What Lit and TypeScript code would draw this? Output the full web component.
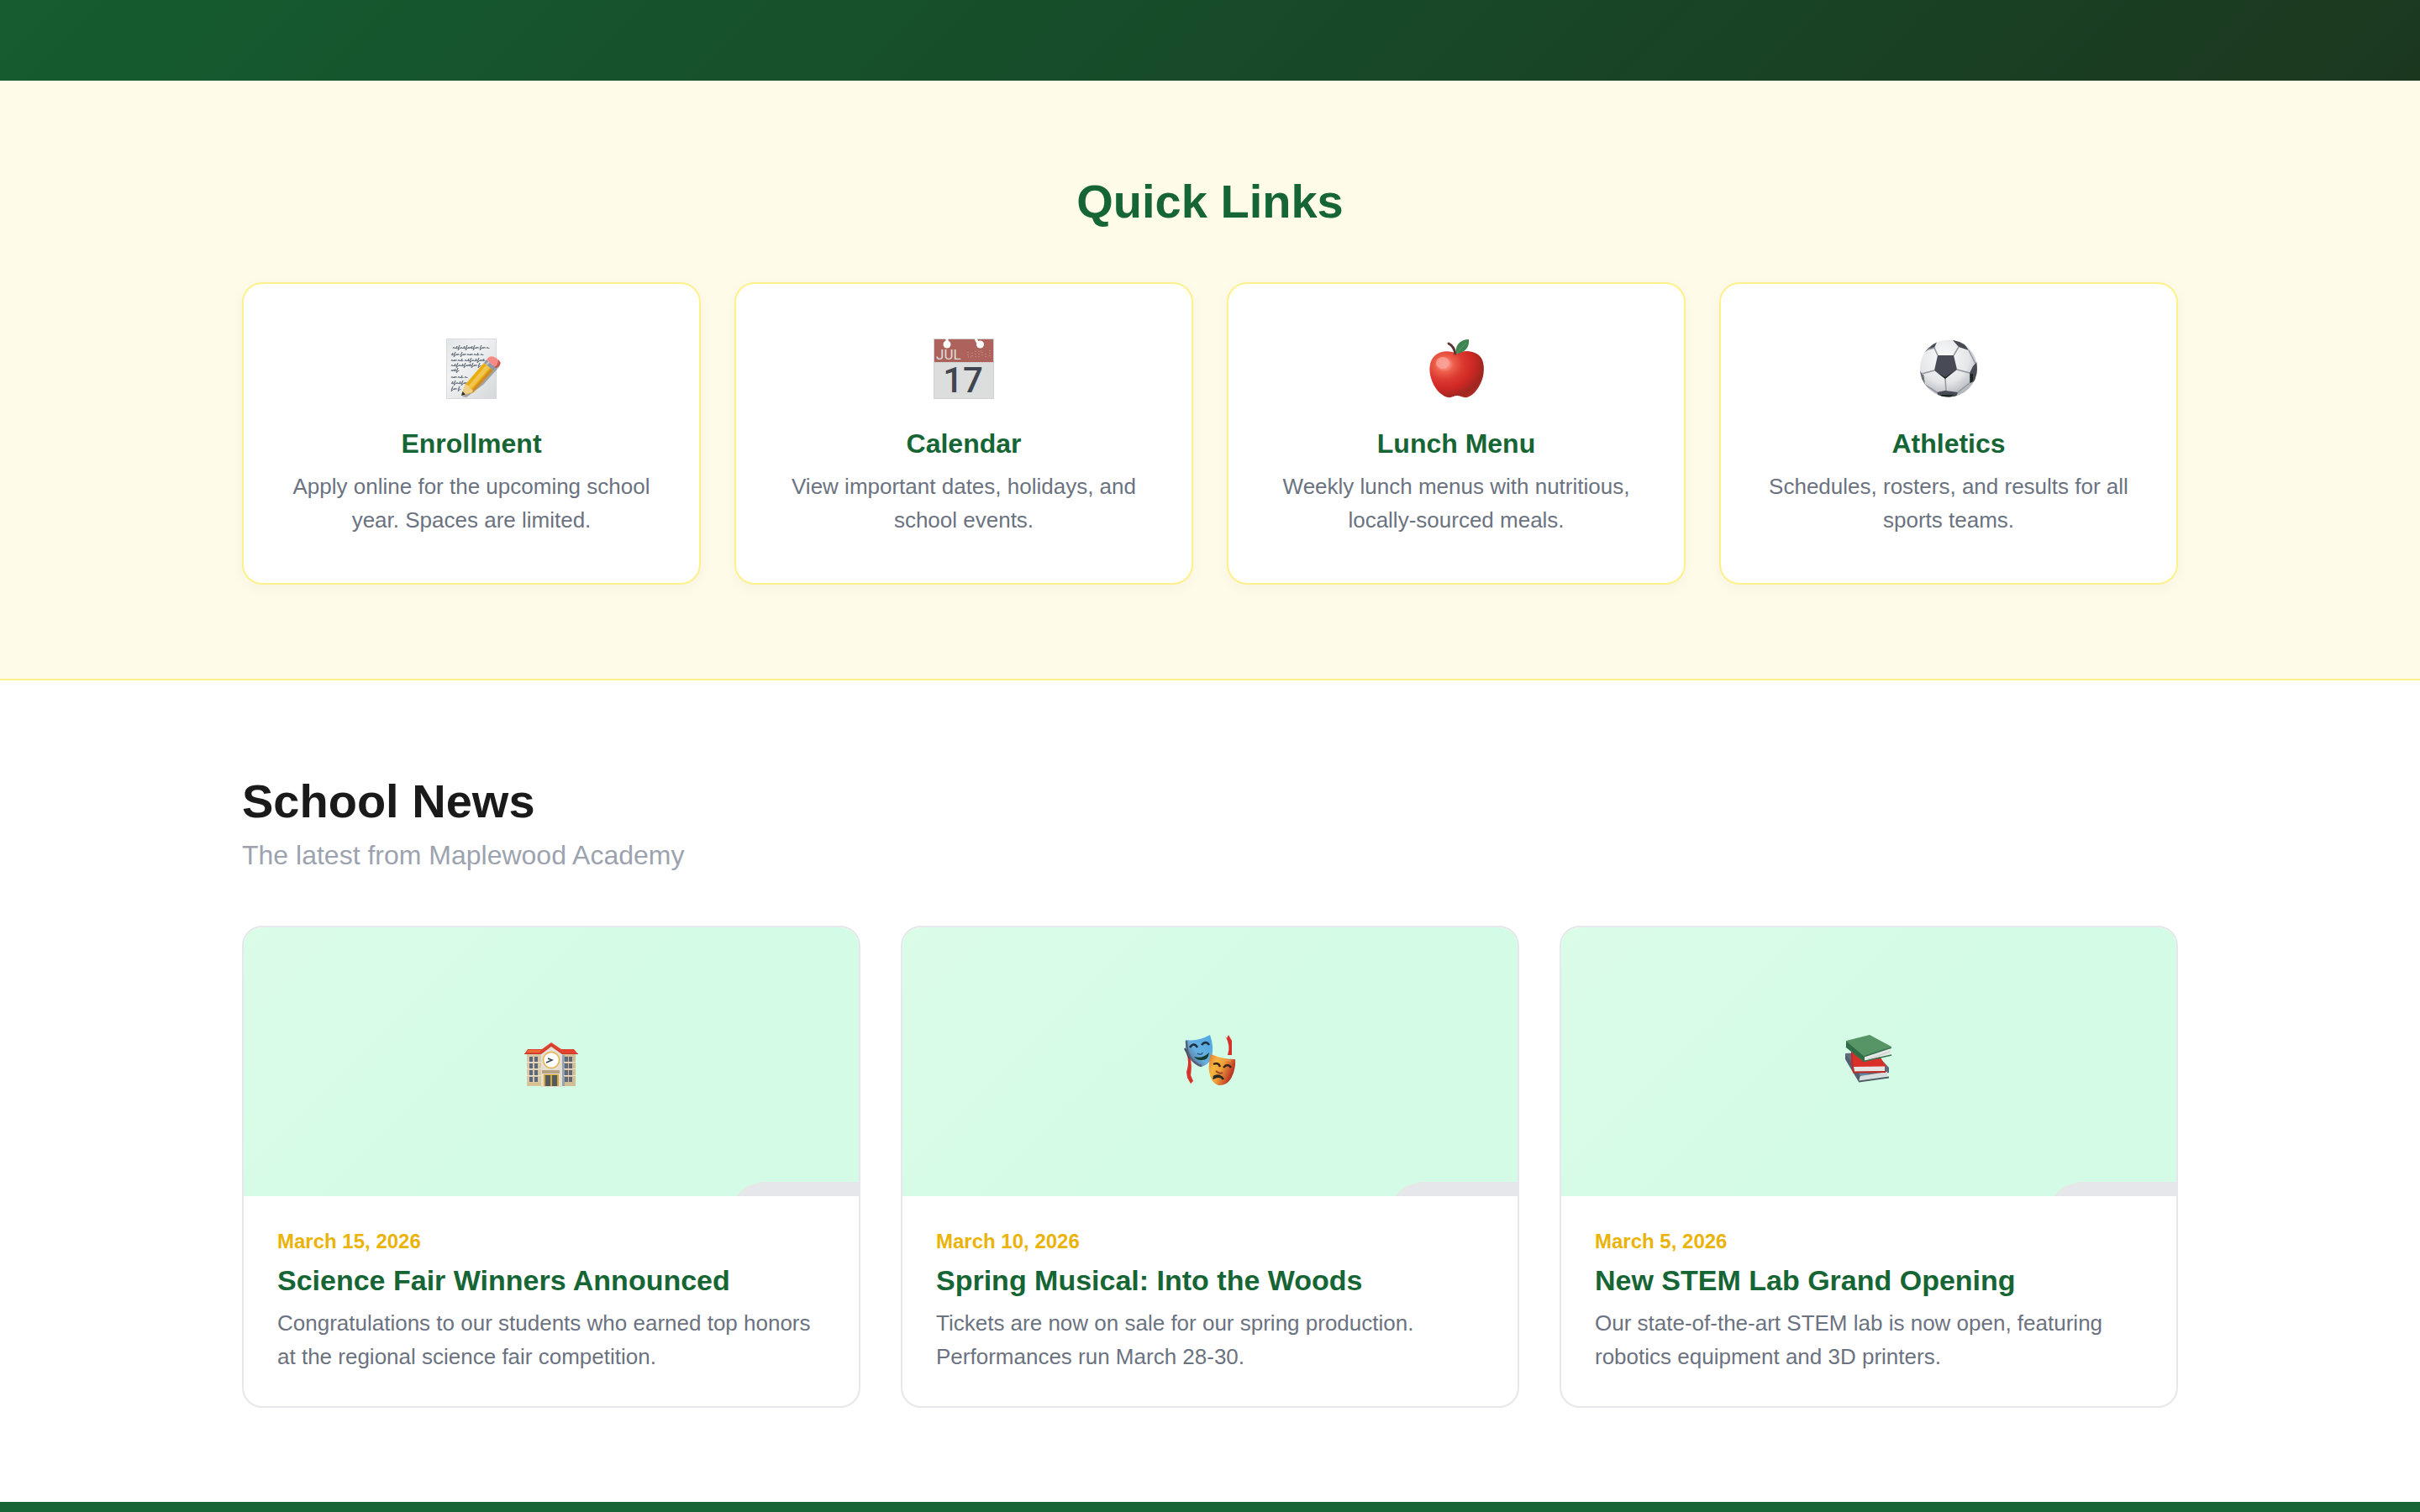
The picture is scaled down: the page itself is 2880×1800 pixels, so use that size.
import { LitElement, html, svg, css, type TemplateResult } from "lit";
import { customElement, property } from "lit/decorators.js";

type Art = TemplateResult;

/* Each row of handwriting: baseline, start and end. */
const handwriting: Array<[number, number, number]> = [
  [12, 6, 52], [20, 6, 48], [27, 6, 46], [33, 6, 40], [39, 6, 14],
  [47, 6, 27], [54, 6, 22], [61, 6, 18],
];

const strokes = ["l2 -3l-1 3l2 -1l0 1", "l1 -2l0 2l2 -2l0 2", "l1 -2l1 2l1 -1l0 1", "l2 -4l-2 6l3 -3l0 1", "m2 0"];

const scribble = ([y, from, to]: [number, number, number]) => {
  let d = `M${from} ${y}`;
  for (let x = from, i = y; x < to; x += 3, i++) d += strokes[(i * 3 + (i >> 2)) % strokes.length];
  return d;
};

const memo: Art = html`<svg viewBox="0 0 72 72" aria-hidden="true">
  <defs>
    <linearGradient id="paper" x1="0" y1="0" x2="1" y2="1">
      <stop offset="0" stop-color="#e2e5e7" /><stop offset=".35" stop-color="#f1f2f3" /><stop offset="1" stop-color="#d5d9da" />
    </linearGradient>
  </defs>
  <rect x="6.5" y=".5" width="59" height="71" fill="url(#paper)" stroke="#d6dadc" />
  <g transform="translate(6 0)">
    ${handwriting.map((row) => svg`<path d=${scribble(row)} fill="none" stroke="#66707c" stroke-width=".9" />`)}
  </g>
  <path d="M25 69 L30 70 L50 55 L69 34 L71 28 L60 33z" fill="#4b5563" opacity=".45" />
  <path d="M24 68 L28.5 55 L51 29 L62 38 L38 64.5z" fill="#eaae0c" />
  <path d="M31.5 57.5 L54 31 L58 34.5 L34.5 61z" fill="#f2c552" />
  <path d="M36 62 L59 36 L62 38 L38 64.5z" fill="#cf8b2c" />
  <path d="M24 68 L28.5 54.5 L32 56 L34 60 L38 61 L37 64z" fill="#eed08b" />
  <path d="M24 68 L25.5 63 L29 66.5z" fill="#263238" />
  <path d="M51 29 L54 25.5 L65 34.5 L62 38z" fill="#8f98a4" />
  <path d="M54 31 L57 28" stroke="#c3c9cf" stroke-width="2" />
  <path d="M54 25.5 Q57 20 62 21.5 Q70 25 70.5 30 Q69 33 65 34.5z" fill="#f58b84" />
  <path d="M63 34 Q68 32 68 25 Q71 28 70 31 Q69 34 65 35z" fill="#ca5550" />
</svg>`;

const calendar: Art = html`<svg viewBox="0 0 72 72" aria-hidden="true">
  <rect x=".5" y=".5" width="71" height="71" fill="#dcdedd" stroke="#d5cfce" />
  <rect x="1" y="1" width="70" height="27" fill="#ad625b" />
  <path d="M0 28.5H72" stroke="#c9c5c4" stroke-dasharray="1 1" />
  <path d="M16 0V6M50 0L53 6" stroke="#fff" stroke-width="3" />
  <circle cx="16" cy="7" r="4.5" fill="#fff" /><circle cx="55.5" cy="7" r="4.5" fill="#fff" />
  <text class="month" x="3" y="25">JUL</text>
  <path d="M41 16v6h5v-5M50 22v-8M54 22v-7h4v7M62 22v-6M67 21v-9" fill="none" stroke="#d3a39a" stroke-dasharray="1 2" />
  <text class="day" x="35" y="64">17</text>
</svg>`;

const apple: Art = html`<svg viewBox="0 0 72 72" aria-hidden="true">
  <defs>
    <radialGradient id="skin" cx=".27" cy=".28" r=".85">
      <stop offset="0" stop-color="#fb9a90" /><stop offset=".13" stop-color="#f58073" /><stop offset=".2" stop-color="#ee5f4b" />
      <stop offset=".4" stop-color="#dc3a31" /><stop offset=".62" stop-color="#cf2824" /><stop offset=".85" stop-color="#9f2620" /><stop offset="1" stop-color="#b32b24" />
    </radialGradient>
  </defs>
  <path d="M36 18C30 14 17 14 11 20C4 26 3 37 6 47C9 58 17 68 26 70C31 71 33 68 37 68C41 68 44 71 49 70C57 68 65 57 68 45C70 35 69 24 62 19C54 14 44 14 36 18z" fill="url(#skin)" />
  <ellipse cx="20" cy="29" rx="8" ry="7" fill="#fba79c" opacity=".7" />
  <path d="M27 6C31 8 34 12 35 18" fill="none" stroke="#5d3434" stroke-width="3" stroke-linecap="round" />
  <path d="M36 18C34 8 41 1 51 1C52 10 47 17 36 18z" fill="#3f8552" />
  <path d="M36 18Q43 10 48 5" stroke="#5ba06b" fill="none" />
</svg>`;

const ball: Art = html`<svg viewBox="0 0 72 72" aria-hidden="true">
  <defs>
    <radialGradient id="leather" cx=".42" cy=".32" r=".72">
      <stop offset="0" stop-color="#fbfbfc" /><stop offset=".6" stop-color="#e4e6e8" /><stop offset="1" stop-color="#a9adb3" />
    </radialGradient>
    <clipPath id="round"><circle cx="36" cy="35.5" r="34" /></clipPath>
  </defs>
  <circle cx="36" cy="35.5" r="34" fill="url(#leather)" />
  <g clip-path="url(#round)">
    <path d="M23 20H42L46 37L32 48L19 38zM6 18L12 8L23 2L19 11L12 13zM40 1L48 10L60 14L54 5zM0 34L4 42L8 55L1 52zM70 27L65 33L61 41V53L70 50zM22 64L32 62L47 64L44 72H26z" fill="#484b56" />
    <path d="M23 41L32 46L42 39L32 48zM62 42V53L65 50V42zM5 43L8 54L6 43zM26 67H42L38 70H28z" fill="#18281f" />
    <path d="M23 20L19 11L12 13M42 20L48 10M46 37L61 41M32 48L33 62M19 38L4 42M8 55L22 64M61 53L47 64M60 14L68 30" fill="none" stroke="#92979e" stroke-width="1.5" />
  </g>
</svg>`;

const schoolWindows = [48, 56, 64, 72].flatMap((y) => [
  [30, y], [36, y], [72, y], [77, y],
]);

const school: Art = html`<svg viewBox="1 -1 110 110" aria-hidden="true">
  <path d="M27 44H44V83H27z" fill="#d9c9a6" />
  <path d="M69 44H85V83H69z" fill="#d2bd95" />
  <path d="M68 46H72V83H68z" fill="#98a1ad" />
  <path d="M27 54.5H44M27 62.5H44M27 70.5H44M71 54.5H85M71 62.5H85M71 70.5H85" stroke="#ebe3d0" />
  <path d="M24 45L28 39H45L56 31L68 39H83L88 45z" fill="#e2432f" />
  <path d="M29 40H44L42 43H27z" fill="#ee8a3c" opacity=".6" />
  <path d="M44 45L56 36L69 45V84H44z" fill="#e3dfd3" />
  <path d="M24 44.5H43L56 34L69 44.5H88" fill="none" stroke="#c23a30" />
  ${schoolWindows.map(([x, y]) => svg`<rect x=${x} y=${y} width="4" height="6" fill="#5f6879" />`)}
  <circle cx="56" cy="52" r="9.5" fill="#fff" stroke="#e8b24a" stroke-width="1.5" />
  <path d="M50 55L57 52L52 50" fill="none" stroke="#3b4250" stroke-width="1.5" />
  <path d="M45 64H66V68H45z" fill="#b8a283" />
  <path d="M47 69H65V83H47z" fill="#dba826" />
  <path d="M49 70H55V83H49zM57 70H63V83H57z" fill="#515b68" />
  <path d="M28 79H44V82H28z" fill="#d9bd80" opacity=".7" />
</svg>`;

const masks: Art = html`<svg viewBox="0 -1 110 110" aria-hidden="true">
  <defs>
    <linearGradient id="joy" x1="1" y1="0" x2="0" y2="1"><stop offset="0" stop-color="#4ba8e3" /><stop offset=".55" stop-color="#68afe0" /><stop offset="1" stop-color="#4c5569" /></linearGradient>
    <linearGradient id="grief" x1="0" y1="0" x2="1" y2=".5"><stop offset="0" stop-color="#e2702c" /><stop offset=".3" stop-color="#f6b640" /><stop offset=".55" stop-color="#f0a038" /><stop offset="1" stop-color="#b42922" /></linearGradient>
  </defs>
  <path d="M27 44Q31 54 27 66L28 73L32 80L35 77L32 70Q34 57 31 46z" fill="#d5332b" />
  <path d="M76 46Q80 35 73 23L75 26L77 22L81 29V46z" fill="#d5332b" />
  <path d="M25 38L31 50" stroke="#344055" stroke-width="2" />
  <path d="M26 28Q41 30 55 22Q60 36 57 49Q54 57 45 60Q34 57 29 46Q25 36 26 28z" fill="url(#joy)" />
  <path d="M27 29Q27 44 34 52Q40 58 45 59" fill="none" stroke="#59617a" stroke-width="2.5" />
  <path d="M31 37Q36 30 40 37M45 34Q50 28 54 34" fill="none" stroke="#1c3040" stroke-width="2.5" />
  <path d="M36 48Q46 51 54 43Q53 53 44 52Q39 52 36 48z" fill="#173f31" />
  <path d="M40 44Q45 47 46 43" fill="none" stroke="#2c617f" stroke-width="1.5" />
  <path d="M56 45Q70 51 85 51Q86 63 80 74Q74 83 65 82Q56 79 54 66Q53 54 56 45z" fill="url(#grief)" />
  <path d="M59 57Q65 54 67 60M71 61Q76 55 80 61" fill="none" stroke="#38261c" stroke-width="2.5" />
  <path d="M58 73Q65 67 72 75Q65 71 59 75z" fill="#252b20" />
  <path d="M59 72Q66 68 71 75" fill="none" stroke="#252b20" stroke-width="2.5" />
  <path d="M62 65Q66 69 70 67" fill="none" stroke="#9d4727" stroke-width="2" />
  <path d="M57 48Q68 53 80 53" stroke="#f1a25a" fill="none" />
</svg>`;

const books: Art = html`<svg viewBox="-1 -1 110 110" aria-hidden="true">
  <path d="M26 44L42 73L78 67V61L60 42z" fill="#626b79" />
  <path d="M43 71L76 66V71L43 76z" fill="#d9dcde" />
  <path d="M26 44V51L42 78L44 70z" fill="#555e6e" />
  <path d="M42 77.5L78 72.5" fill="none" stroke="#535b68" stroke-width="2" />
  <path d="M43 69H53" stroke="#58a6d6" />
  <path d="M33 42L36 60H75L66 46z" fill="#d92f28" />
  <path d="M36 60L73 59.5V65L37 66z" fill="#e6e6e4" />
  <path d="M34 43V57L36 66.5L74 66" fill="none" stroke="#c22a25" stroke-width="2" />
  <path d="M27 29L55 22L81 36L50 50z" fill="#579567" />
  <path d="M27 29L50 49V54L27 37z" fill="#2f6b45" />
  <path d="M49 48L80 38V45L49 53z" fill="#e5e8e5" />
  <path d="M27 36L48 53.5L81 46M49 47.5L81 37" fill="none" stroke="#37724d" stroke-width="1.5" />
  <path d="M53 51L79 42" stroke="#c6ccc8" />
</svg>`;

interface QuickLink { title: string; text: string; art: Art }
interface Story { date: string; title: string; text: string; art: Art }

const quickLinks: QuickLink[] = [
  { title: "Enrollment", text: "Apply online for the upcoming school year. Spaces are limited.", art: memo },
  { title: "Calendar", text: "View important dates, holidays, and school events.", art: calendar },
  { title: "Lunch Menu", text: "Weekly lunch menus with nutritious, locally-sourced meals.", art: apple },
  { title: "Athletics", text: "Schedules, rosters, and results for all sports teams.", art: ball },
];

const stories: Story[] = [
  { date: "March 15, 2026", title: "Science Fair Winners Announced", text: "Congratulations to our students who earned top honors at the regional science fair competition.", art: school },
  { date: "March 10, 2026", title: "Spring Musical: Into the Woods", text: "Tickets are now on sale for our spring production. Performances run March 28-30.", art: masks },
  { date: "March 5, 2026", title: "New STEM Lab Grand Opening", text: "Our state-of-the-art STEM lab is now open, featuring robotics equipment and 3D printers.", art: books },
];

const base = css`
  * { box-sizing: border-box; margin: 0; }
  svg { display: block; overflow: visible; }
  h3 { font-weight: 700; color: #166534; }
  p { font-size: 26px; line-height: 40px; color: #6b7280; }
`;

@customElement("quick-link-card")
class QuickLinkCard extends LitElement {
  @property({ attribute: false }) item!: QuickLink;

  static styles = [base, css`
    :host { display: block; }
    .card {
      height: 100%;
      padding: 65px 56px 55px;
      display: flex;
      flex-direction: column;
      align-items: center;
      text-align: center;
      background: #fff;
      border: 2px solid #fef08a;
      border-radius: 24px;
      box-shadow: 0 4px 16px rgba(0, 0, 0, 0.04);
    }
    .icon { width: 72px; height: 72px; margin-bottom: 34px; }
    .title { font-size: 32px; line-height: 38px; margin-bottom: 12px; }
    .month { font: 17px Roboto, "Liberation Sans", sans-serif; fill: #dcdedd; }
    .day { font: 500 42px Roboto, "Liberation Sans", sans-serif; fill: #41454f; text-anchor: middle; }
  `];

  render() {
    return html`<article class="card">
      <div class="icon">${this.item.art}</div>
      <h3 class="title">${this.item.title}</h3>
      <p>${this.item.text}</p>
    </article>`;
  }
}

@customElement("news-card")
class NewsCard extends LitElement {
  @property({ attribute: false }) item!: Story;

  static styles = [base, css`
    :host { display: block; }
    .card {
      height: 100%;
      background: #fff;
      border: 2px solid #e5e7eb;
      border-radius: 24px;
      overflow: hidden;
    }
    .cover {
      position: relative;
      height: 320px;
      display: grid;
      place-items: center;
      background: linear-gradient(135deg, #dbfce7, #d3fbe5 60%);
    }
    .icon { width: 110px; height: 110px; }
    .fold {
      position: absolute;
      right: 0;
      bottom: 0;
      width: 146px;
      height: 17px;
      background: #e5e7eb;
      clip-path: polygon(0 100%, 12px 35%, 30px 0, 100% 0, 100% 100%);
    }
    .body { padding: 40px 40px 39px; }
    .date { display: block; font-size: 24px; line-height: 28px; font-weight: 700; color: #eab308; margin-bottom: 13px; }
    .title { font-size: 34px; line-height: 38px; margin-bottom: 12px; }
  `];

  render() {
    return html`<article class="card">
      <div class="cover"><div class="icon">${this.item.art}</div><span class="fold"></span></div>
      <div class="body">
        <time class="date">${this.item.date}</time>
        <h3 class="title">${this.item.title}</h3>
        <p>${this.item.text}</p>
      </div>
    </article>`;
  }
}

@customElement("app-root")
class AppRoot extends LitElement {
  static styles = [base, css`
    :host {
      display: block;
      height: 100vh;
      overflow: hidden;
      background: #fff;
      font-family: "Liberation Sans", Arial, Helvetica, sans-serif;
    }
    .hero { height: 96px; background: linear-gradient(135deg, #155c30, #174b29 50%, #1b381f); }
    .section { padding: 112px 10%; }
    .quick { background: #fefce8; border-bottom: 2px solid #fef08a; }
    .heading { font-size: 56px; line-height: 64px; font-weight: 700; color: #1a1a1a; }
    .centered { text-align: center; color: #166534; margin-bottom: 64px; }
    .subtitle { font-size: 32px; line-height: 36px; color: #9ca3af; margin: 14px 0 66px; }
    .links { display: grid; grid-template-columns: repeat(4, 1fr); gap: 40px; }
    .news { display: grid; grid-template-columns: repeat(3, 1fr); gap: 48px; }
    .footer { height: 112px; background: #166534; }
  `];

  render() {
    return html`
      <header class="hero"></header>
      <main>
        <section class="section quick">
          <h2 class="heading centered">Quick Links</h2>
          <div class="links">${quickLinks.map((item) => html`<quick-link-card .item=${item}></quick-link-card>`)}</div>
        </section>
        <section class="section">
          <h2 class="heading">School News</h2>
          <p class="subtitle">The latest from Maplewood Academy</p>
          <div class="news">${stories.map((item) => html`<news-card .item=${item}></news-card>`)}</div>
        </section>
      </main>
      <footer class="footer"></footer>
    `;
  }
}
